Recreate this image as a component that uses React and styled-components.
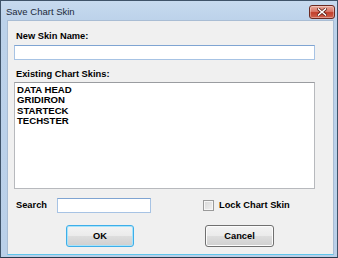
import React from "react";
import styled, { createGlobalStyle } from "styled-components";

const Global = createGlobalStyle`
  html, body { margin: 0; padding: 0; background: #ffffff; }
  * { box-sizing: border-box; }
`;

const Window = styled.div`
  width: 338px;
  height: 258px;
  display: flex;
  flex-direction: column;
  border: 1px solid #3f5369;
  border-bottom-color: #2a3a4c;
  background: linear-gradient(180deg, #c7daef 0%, #bcd2ea 20px, #bad0e9 100%);
  overflow: hidden;
`;

const TitleBar = styled.div`
  height: 19px;
  flex: none;
  display: flex;
  align-items: center;
  justify-content: space-between;
  padding: 0 2px 0 5px;
`;

const Title = styled.span`
  font-family: "Liberation Sans", Arial, sans-serif;
  font-size: 9.5px;
  color: #1c2a3a;
  padding-top: 1px;
`;

const CloseButton = styled.div`
  width: 26px;
  height: 14px;
  margin-top: 2px;
  border: 1px solid #6b2a22;
  border-radius: 3px;
  background: linear-gradient(180deg, #e9a99c 0%, #d9796a 45%, #c23f2c 55%, #d0624e 100%);
  display: flex;
  align-items: center;
  justify-content: center;
  box-shadow: inset 0 0 0 1px rgba(255, 255, 255, 0.35);
`;

const Client = styled.div`
  flex: 1;
  margin: 0 3px 2px 6px;
  background: #f0f0f0;
  border: 1px solid #a9bdd4;
  border-bottom: 1px solid #60c6ec;
  padding: 9px 0 0 6px;
  display: flex;
  flex-direction: column;
`;

const Label = styled.div`
  font-family: "Liberation Sans", Arial, sans-serif;
  font-weight: bold;
  font-size: 9.3px;
  line-height: 13px;
  color: #000;
  margin-left: 2px;
  margin-top: ${(p) => p.$top || 0}px;
`;

const TextBox = styled.div`
  width: ${(p) => p.$w}px;
  height: 15px;
  background: #fff;
  border: 1px solid #a7c3e4;
  border-top-color: #7fa4d2;
  margin-top: ${(p) => p.$top || 0}px;
`;

const ListBox = styled.div`
  width: 301px;
  height: 107px;
  margin-top: 1px;
  background: #fff;
  border: 1px solid #b7b9bd;
  border-top-color: #9a9ca0;
  padding: 2px 0 0 2px;
`;

const ListItem = styled.div`
  font-family: "Liberation Sans", Arial, sans-serif;
  font-weight: bold;
  font-size: 9.6px;
  line-height: 10.33px;
  color: #000;
`;

const BottomRow = styled.div`
  display: flex;
  align-items: center;
  margin-top: 8px;
  height: 16px;
`;

const SearchLabel = styled(Label)`
  width: 41px;
  margin-top: 0;
`;

const CheckLabel = styled.label`
  display: flex;
  align-items: center;
  gap: 5px;
  margin-left: 52px;
  font-family: "Liberation Sans", Arial, sans-serif;
  font-weight: bold;
  font-size: 9.3px;
  color: #000;
`;

const CheckBox = styled.span`
  width: 11px;
  height: 11px;
  border: 1px solid #9a9a9a;
  background: linear-gradient(135deg, #d8d8d8 0%, #f2f2f2 100%);
  box-shadow: inset 0 0 0 1px #f6f6f6;
`;

const ButtonRow = styled.div`
  display: flex;
  margin-top: 12px;
  padding-left: 52px;
  gap: 71px;
`;

const Button = styled.div`
  width: ${(p) => p.$w}px;
  height: 22px;
  border: 1px solid ${(p) => (p.$default ? "#3daee9" : "#707070")};
  border-radius: 3px;
  background: linear-gradient(180deg, #f3f3f3 0%, #ebebeb 48%, #dddddd 52%, #cfcfcf 100%);
  box-shadow: inset 0 0 0 1px ${(p) => (p.$default ? "#a8e3fa" : "#fcfcfc")};
  display: flex;
  align-items: center;
  justify-content: center;
  font-family: "Liberation Sans", Arial, sans-serif;
  font-weight: bold;
  font-size: 9.3px;
  color: #000;
`;

const skins = ["DATA HEAD", "GRIDIRON", "STARTECK", "TECHSTER"];

export default function App() {
  return (
    <>
      <Global />
      <Window>
        <TitleBar>
          <Title>Save Chart Skin</Title>
          <CloseButton>
            <svg width="10" height="8" viewBox="0 0 10 8">
              <path d="M1.5 1 L8.5 7 M8.5 1 L1.5 7" stroke="#5a1a12" strokeWidth="3" strokeLinecap="square" />
              <path d="M1.5 1 L8.5 7 M8.5 1 L1.5 7" stroke="#ffffff" strokeWidth="1.6" strokeLinecap="square" />
            </svg>
          </CloseButton>
        </TitleBar>
        <Client>
          <Label>New Skin Name:</Label>
          <TextBox $w={301} $top={2} />
          <Label $top={8}>Existing Chart Skins:</Label>
          <ListBox>
            {skins.map((s) => (
              <ListItem key={s}>{s}</ListItem>
            ))}
          </ListBox>
          <BottomRow>
            <SearchLabel>Search</SearchLabel>
            <TextBox $w={94} />
            <CheckLabel>
              <CheckBox />
              Lock Chart Skin
            </CheckLabel>
          </BottomRow>
          <ButtonRow>
            <Button $w={68} $default>OK</Button>
            <Button $w={69}>Cancel</Button>
          </ButtonRow>
        </Client>
      </Window>
    </>
  );
}
